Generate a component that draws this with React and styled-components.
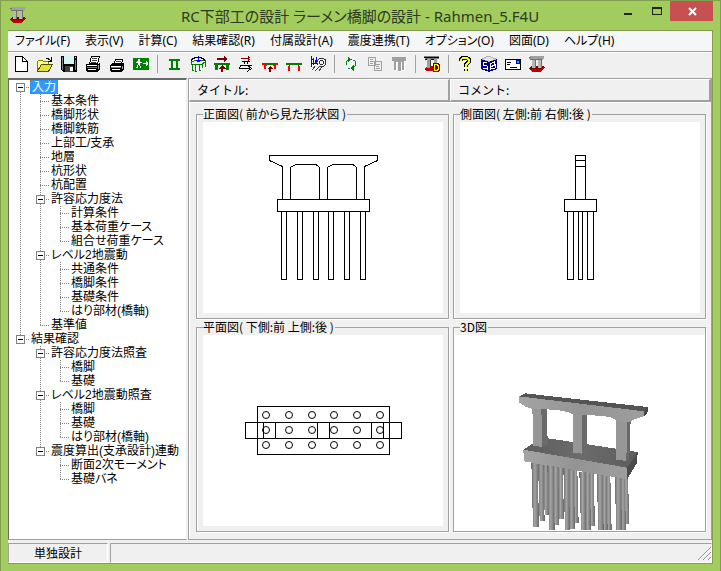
import React, { useState } from 'react'
import styled, { createGlobalStyle, css } from 'styled-components'

const color = {
  frame: '#a2cd5e',
  frameEdge: '#809e4c',
  face: '#f0f0f0',
  shadow: '#a0a0a0',
  dark: '#696969',
  light: '#ffffff',
  select: '#3399ff',
  close: '#c75050'
}

const uiFont = '"Noto Sans", "Noto Sans CJK JP", sans-serif'
const gothic = '"Noto Sans CJK JP", sans-serif'
const treeFont = '"Liberation Sans", "Noto Sans CJK JP", sans-serif'

const GlobalStyle = createGlobalStyle`
  * {
    box-sizing: border-box;
  }

  body {
    margin: 0;
    font-family: ${gothic};
    font-size: 12px;
    line-height: 14px;
    font-feature-settings: "palt";
    color: #000;
  }

  button {
    margin: 0;
    padding: 0;
    border: 0;
    background: none;
    color: inherit;
    font: inherit;
    font-feature-settings: inherit;
  }
`

const Window = styled.div`
  display: flex;
  flex-direction: column;
  min-height: 100vh;
  padding: 0 7px 7px;
  background: ${color.frame};
  border: 1px solid ${color.frameEdge};
`

const TitleBar = styled.header`
  display: grid;
  grid-template-columns: 97px 1fr 100px;
  height: 29px;
  padding-left: 2px;
  align-items: start;
`

const AppIcon = styled.span`
  display: flex;
  padding-top: 6px;
`

const Caption = styled.h1`
  margin: 0;
  padding-top: 3px;
  font-family: ${uiFont};
  font-size: 15px;
  font-weight: 400;
  line-height: 24px;
  text-align: center;
  white-space: nowrap;
  color: #2c3a22;
`

const WindowButtons = styled.div`
  display: flex;
  justify-content: flex-end;
`

const WindowButton = styled.button`
  display: flex;
  width: ${props => props.$close ? 45 : 30}px;
  height: 20px;
  align-items: center;
  justify-content: center;
  background: ${props => props.$close ? color.close : 'transparent'};
`

const Client = styled.div`
  display: flex;
  flex: 1;
  flex-direction: column;
  background: ${color.face};
  border: 1px solid ${color.frameEdge};
  border-width: 1px 1px 1px 0;
`

const MenuBar = styled.nav`
  display: flex;
  gap: 15px;
  height: 20px;
  padding-left: 7px;
  align-items: flex-start;
  background: #f5f6f7;
`

const MenuItem = styled.button`
  font-family: ${uiFont};
  font-size: 12px;
  line-height: 20px;
  white-space: nowrap;
`

const ToolBar = styled.div`
  display: flex;
  height: 27px;
  padding: 0 1px 2px;
  align-items: center;
  border-top: 1px solid ${color.shadow};
  box-shadow: inset 0 1px ${color.light};
`

const ToolButton = styled.button`
  display: flex;
  width: 24px;
  height: 24px;
  align-items: center;
  justify-content: center;
`

const Separator = styled.span`
  width: 1px;
  height: 18px;
  margin: 0 4px;
  background: ${color.shadow};
`

const Workspace = styled.main`
  display: grid;
  flex: 1;
  grid-template-columns: 179px 1fr;
  column-gap: 1px;
`

const Tree = styled.div`
  padding: 0 0 0 1px;
  font-family: ${treeFont};
  background: ${color.light};
  border-top: 2px solid ${color.dark};
  border-left: 1px solid ${color.dark};
  border-right: 1px solid ${color.face};
  border-bottom: 1px solid ${color.shadow};
`

const TreeRow = styled.div`
  display: flex;
  height: 14px;
`

const dots = deg => `repeating-linear-gradient(${deg}deg, #808080 0 1px, transparent 1px 2px)`

const Guide = styled.span`
  display: flex;
  flex: none;
  width: 20px;
  height: 14px;
  align-items: center;
  padding-left: 6px;
  ${props => props.$line === 'pass' && css`
    background: ${dots(180)} 10px 0 / 1px 14px no-repeat;
  `}
  ${props => props.$line === 'first' && css`
    background:
      ${dots(180)} 10px 8px / 1px 6px no-repeat,
      ${dots(90)} 10px 7px / 9px 1px no-repeat;
  `}
  ${props => props.$line === 'branch' && css`
    background:
      ${dots(180)} 10px 0 / 1px 14px no-repeat,
      ${dots(90)} 10px 7px / 9px 1px no-repeat;
  `}
  ${props => props.$line === 'last' && css`
    background:
      ${dots(180)} 10px 0 / 1px 8px no-repeat,
      ${dots(90)} 10px 7px / 9px 1px no-repeat;
  `}
`

const Toggle = styled.button`
  display: grid;
  width: 9px;
  height: 9px;
  place-items: center;
  background: ${color.light};
  border: 1px solid #808080;

  &::before {
    content: "";
    width: 5px;
    height: ${props => props.$open ? 1 : 5}px;
    background: ${props => props.$open
      ? '#000'
      : 'linear-gradient(#000, #000) 50% 50% / 5px 1px no-repeat, linear-gradient(#000, #000) 50% 50% / 1px 5px no-repeat'};
  }
`

const TreeLabel = styled.button`
  height: 14px;
  padding: 0 1px;
  line-height: 14px;
  white-space: nowrap;
  ${props => props.$selected && css`
    padding: 0 2px;
    background: ${color.select};
    color: #fff;
    outline: 1px dotted #cc6600;
    outline-offset: -1px;
  `}
`

const Views = styled.section`
  display: flex;
  flex-direction: column;
  border: 1px solid ${color.shadow};
  box-shadow: inset 1px 1px ${color.light};
`

const Headings = styled.div`
  display: grid;
  grid-template-columns: 1fr 1fr;
  border-bottom: 1px solid ${color.light};
`

const Heading = styled.div`
  height: 23px;
  padding: 3px 7px 0;
  border: 1px solid ${color.light};
  border-right: 2px solid ${color.shadow};
  border-bottom: 2px solid ${color.shadow};
  font-feature-settings: normal;
  font-size: 12px;
`

const ViewGrid = styled.div`
  display: grid;
  flex: 1;
  grid-template-columns: 1fr 1fr;
  grid-template-rows: 1fr 1fr;
  gap: 1px 4px;
  padding: 4px 5px 7px 7px;
`

const View = styled.fieldset`
  display: flex;
  min-width: 0;
  margin: 0;
  padding: ${props => props.$flush ? '1px 0 0' : '1px 5px 5px 6px'};
  border: 1px solid ${color.shadow};
  box-shadow: 1px 1px ${color.light}, inset 1px 0 ${color.light};
`

const Legend = styled.legend`
  margin-left: ${props => props.$flush ? 6 : 0}px;
  padding: 0 1px 0 0;
  background: ${color.face};
  line-height: 14px;
  white-space: pre;
`

const Canvas = styled.div`
  display: flex;
  flex: 1;
  align-items: ${props => props.$flush ? 'flex-end' : 'center'};
  justify-content: center;
  overflow: hidden;
  background: ${color.light};
`

const StatusBar = styled.footer`
  display: grid;
  height: 22px;
  margin-top: 1px;
  padding-top: 2px;
  grid-template-columns: 100px 1fr;
  column-gap: 2px;
`

const StatusCell = styled.div`
  display: flex;
  align-items: center;
  justify-content: ${props => props.$end ? 'flex-end' : 'center'};
  border: 1px solid ${color.shadow};
  border-right-color: ${color.light};
  border-bottom-color: ${color.light};
`

const Svg = ({ size = 16, children }) => (
  <svg width={size} height={size} viewBox="0 0 16 16" fill="none" shapeRendering="crispEdges" aria-hidden="true">
    {children}
  </svg>
)

const NewIcon = () => (
  <Svg>
    <path d="M2.5 .5H9.500L14.500 5.500V15.500H2.500Z" fill="#fff" stroke="#000" />
    <path d="M9.500 .5V5.500H14.500" stroke="#000" />
  </Svg>
)

const OpenIcon = () => (
  <Svg>
    <path d="M.5 14.500V5.500L2 4.500H5L6.500 5.500H11.500V8.500" fill="#ffff80" stroke="#808000" />
    <path d="M.5 15L4.500 8.500H15.500L11.500 15.500H1Z" fill="#e4e430" stroke="#505000" />
    <path d="M9 2.500H10.500L14 4.500M14.500 1V5.500H11" stroke="#000" />
  </Svg>
)

const SaveIcon = () => (
  <Svg>
    <path d="M0 0H16V16H2L0 14Z" fill="#000" />
    <path d="M3 0H13V8H3Z" fill="#d8f4f8" />
    <path d="M4 10H12V16H4Z" fill="#404040" />
    <path d="M9 11H12V15H9ZM14 1H15V2H14Z" fill="#fff" />
    <path d="M1 1V14M14.500 4V14" stroke="#808080" />
  </Svg>
)

const PrintIcon = () => (
  <Svg>
    <path d="M4.500 7.500L6.500 .5H14.500L12.500 7.500Z" fill="#fff" stroke="#000" />
    <path d="M7 2.500H12M6.500 4.500H11.500M6 6.500H11" stroke="#404040" />
    <path d="M1 8H13L15 6V13L12 16H2L1 15Z" fill="#000" />
    <path d="M2 9.500H12M3 13.500H11" stroke="#fff" />
    <path d="M2 11.500H12" stroke="#7070b0" />
    <path d="M13.500 9V13" stroke="#a0a0a0" />
  </Svg>
)

const QuickPrintIcon = () => (
  <Svg>
    <path d="M4.500 8.500L6.500 3.500H13.500L12.500 8.500Z" fill="#fff" stroke="#000" />
    <path d="M7 5.500H12" stroke="#404040" />
    <path d="M1 9L3 7H14L15 8V13L12 16H2L1 15Z" fill="#000" />
    <path d="M2 10.500H12M3 13.500H11" stroke="#fff" />
    <path d="M2 11.500H12" stroke="#7070b0" />
    <path d="M13.500 10V13" stroke="#a0a0a0" />
  </Svg>
)

const ExitIcon = () => (
  <Svg>
    <path d="M0 2H16V14H0Z" fill="#008000" />
    <path d="M5 3H7V5H5ZM4 5H7V9H5V7H3V6H4ZM7 6H9V7H7ZM4 9H5V12H3V11H4ZM6 8H7V10H8V12H7V10H6ZM10 7H13V5H14V6H15V9H14V10H13V8H10Z" fill="#fff" />
  </Svg>
)

const FrameIcon = () => (
  <Svg>
    <path d="M3 3H14V5H3ZM5 5H7V12H5ZM10 5H12V12H10ZM3 12H14V14H3Z" fill="#008000" />
  </Svg>
)

const LoadIcon = () => (
  <Svg>
    <path d="M1 6L5 4.500H15V6L12 8H1ZM2.500 8V14M5.500 8V15M9.500 8V14M12.500 7V12M15 6V11M2 14H4M5 15H7M9 14H11" stroke="#008000" />
    <path d="M1 4.500L3 2.500L6 1.500H10L13 2.500L15 4.500" stroke="#000" />
    <path d="M8.500 0V6M6 4.500H11M7 5.500H10" stroke="#0000ff" />
  </Svg>
)

const GirderLoadIcon = () => (
  <Svg>
    <path d="M0 7H16V9H0ZM1 9H4V14H1ZM12 9H15V14H12Z" fill="#008000" />
    <path d="M3 2H10V0L14 3L10 6V4H3ZM8 9L12 13H9V16H7V13H4Z" fill="#800000" />
  </Svg>
)

const BearingIcon = () => (
  <Svg>
    <path d="M3 2.500H11M12.500 2.500L10 .5M12.500 2.500L10 4.500" stroke="#800000" />
    <path d="M4 5.500H12M6.500 5V8M9.500 5V8M3 9.500H14M3 9L1.500 12.500H12M9 15.500L13.500 12.500L10 10" stroke="#000" />
  </Svg>
)

const PushoverIcon = () => (
  <Svg>
    <path d="M3 7H13V9H3ZM4 9H5V10H4ZM11 9H12V10H11Z" fill="#008000" />
    <path d="M0 7H3V9H0ZM13 7H16V9H13ZM2 9H4V13H2ZM12 9H14V13H12Z" fill="#ff0000" />
    <path d="M8 10L11 13H9V16H7V13H5Z" fill="#800000" />
  </Svg>
)

const PortalIcon = () => (
  <Svg>
    <path d="M0 7H16V9H0ZM3 9H4V10H3ZM12 9H13V10H12Z" fill="#008000" />
    <path d="M2 10H4V15H2ZM12 10H14V15H12Z" fill="#ff0000" />
  </Svg>
)

const SectionIcon = () => (
  <Svg>
    <path d="M1.500 0V11M3.500 2V9M5.500 4V8M6.500 1V8M1 3.500H4M1 7.500H7" stroke="#0000ff" />
    <circle cx="11.500" cy="6.500" r="4.500" stroke="#303030" />
    <circle cx="11.500" cy="6.500" r="2" stroke="#303030" />
    <path d="M2 14L5 10.500M5 15L9 11M9 15L11 12" stroke="#404040" />
  </Svg>
)

const RefreshIcon = () => (
  <Svg>
    <path d="M3.500 9V5.500L6 3.500M12.500 5V9.500L10 12.500" stroke="#008000" />
    <path d="M5 1L9 3.500L5 6ZM11 9V15L7 12Z" fill="#008000" />
    <path d="M5 12.500H7M10 4.500H12" stroke="#008080" />
  </Svg>
)

const CopyIcon = () => (
  <Svg>
    <path d="M1.500 1.500H8.500V9.500H1.500ZM7.500 5.500H14.500V14.500H7.500Z" fill="#f0f0f0" stroke="#a0a0a0" />
    <path d="M3 3.500H6M3 5.500H7M3 7.500H6M9 8.500H13M9 10.500H12M9 12.500H13" stroke="#a0a0a0" />
  </Svg>
)

const PilesIcon = () => (
  <Svg>
    <path d="M2 2H16V7H15V5H14V15H12V7H11V16H8V7H6V15H4V5H2Z" fill="#fff" />
    <path d="M1 1H15V5H13V14H11V6H10V15H7V6H5V14H3V5H1Z" fill="#a0a0a0" />
  </Svg>
)

const PierIcon = () => (
  <Svg>
    <path d="M0 12L3 10H14L16 12L12 15H2Z" fill="#800000" />
    <path d="M2 13H12L15 11V13L11 16H3Z" fill="#c00000" />
    <path d="M0 1L2 0H15V3L13 4H1Z" fill="#a0a0a0" />
    <path d="M3 3H7V12H3ZM9 3H13V12H9Z" fill="#b8b8b8" />
    <path d="M6 4V12M12.500 4V12M0 1.500H2M1 3.500H13" stroke="#707070" />
  </Svg>
)

const DrawingIcon = () => (
  <Svg>
    <path d="M1 12L4 10H10V15H2Z" fill="#c00000" />
    <path d="M0 0H15V3H1Z" fill="#808080" />
    <path d="M0 1.500H15M1 3.500H13" stroke="#000" />
    <path d="M3 3H7V12H3ZM10 3H13V7H10Z" fill="#a0a0a0" />
    <path d="M6.500 4V12" stroke="#404040" />
    <path d="M9 7H14L16 9V14L14 16H9Z" fill="#800000" />
    <path d="M10.500 8.500H13L14.500 10V13L13 14.500H10.500Z" stroke="#ffff00" />
  </Svg>
)

const HelpIcon = () => (
  <Svg>
    <path d="M4 5V3.500L5.500 2H10L12 3.500V6L8.500 9V11M8.500 13V15" stroke="#000" strokeWidth="4" />
    <path d="M4 5V3.500L5.500 2H10L12 3.500V6L8.500 9V11M8.500 13V15" stroke="#ffff00" strokeWidth="2" />
  </Svg>
)

const ProductIcon = () => (
  <Svg>
    <path d="M1 3L7 0L15 3L8 6Z" fill="#e4e4e4" stroke="#b0b0b0" />
    <path d="M0 3L8 6L16 3V13L8 16L0 13Z" fill="#000080" />
    <path d="M6 7L2 6V9L6 10V13L2 12M9.500 14V8L13 6V9L10 11L14 9V12L10 13" stroke="#fff" />
  </Svg>
)

const MailIcon = () => (
  <Svg>
    <path d="M.5 3.500H15.500V13.500H.5Z" fill="#fff" stroke="#000" />
    <path d="M11 4H15V8H11Z" fill="#0000a0" />
    <path d="M12 5H14V7H12Z" fill="#00c0ff" />
    <path d="M2 6.500H6M2 8.500H5M5 11.500H12" stroke="#000" />
  </Svg>
)

const MinimizeIcon = () => (
  <Svg>
    <path d="M5 10H13V12H5Z" fill="#1c2414" />
  </Svg>
)

const MaximizeIcon = () => (
  <Svg>
    <path d="M4 4H14V12H4ZM5 6V11H13V6Z" fill="#1c2414" fillRule="evenodd" />
  </Svg>
)

const CloseIcon = () => (
  <svg width="16" height="16" viewBox="0 0 16 16" aria-hidden="true">
    <path d="M5 5L12 12M12 5L5 12" stroke="#fff" strokeWidth="2" />
  </svg>
)

const GripIcon = () => (
  <svg width="14" height="14" viewBox="0 0 14 14" aria-hidden="true">
    <path d="M1 14L14 1M6 14L14 6M11 14L14 11" stroke="#909090" strokeWidth="1" />
    <path d="M2 14L14 2M7 14L14 7M12 14L14 12" stroke="#fff" strokeWidth="1" />
  </svg>
)

const menus = [
  'ファイル(F)', '表示(V)', '計算(C)', '結果確認(R)', '付属設計(A)',
  '震度連携(T)', 'オプション(O)', '図面(D)', 'ヘルプ(H)'
]

const tools = [
  [['新規', NewIcon], ['開く', OpenIcon], ['保存', SaveIcon], ['印刷', PrintIcon], ['簡易印刷', QuickPrintIcon], ['終了', ExitIcon]],
  [['形状', FrameIcon], ['荷重', LoadIcon], ['橋脚', GirderLoadIcon], ['支承', BearingIcon], ['はり', PushoverIcon], ['柱', PortalIcon], ['断面', SectionIcon]],
  [['更新', RefreshIcon], ['複写', CopyIcon], ['杭', PilesIcon]],
  [['図面', DrawingIcon]],
  [['ヘルプ', HelpIcon], ['製品', ProductIcon], ['メール', MailIcon], ['バージョン', PierIcon]]
]

const leaf = title => ({ title })

const tree = [
  {
    title: '入力',
    children: [
      ...['基本条件', '橋脚形状', '橋脚鉄筋', '上部工/支承', '地層', '杭形状', '杭配置'].map(leaf),
      { title: '許容応力度法', children: ['計算条件', '基本荷重ケース', '組合せ荷重ケース'].map(leaf) },
      { title: 'レベル2地震動', children: ['共通条件', '橋脚条件', '基礎条件', 'はり部材(橋軸)'].map(leaf) },
      leaf('基準値')
    ]
  },
  {
    title: '結果確認',
    children: [
      { title: '許容応力度法照査', children: ['橋脚', '基礎'].map(leaf) },
      { title: 'レベル2地震動照査', children: ['橋脚', '基礎', 'はり部材(橋軸)'].map(leaf) },
      { title: '震度算出(支承設計)連動', children: ['断面2次モーメント', '基礎バネ'].map(leaf) }
    ]
  }
]

const TreeNodes = ({ nodes, guides = [], path = '', state }) => nodes.map((node, i) => {
  const id = `${path}/${i}`
  const last = i === nodes.length - 1
  const open = !state.closed.includes(id)
  const line = last ? 'last' : !path && i === 0 ? 'first' : 'branch'

  return (
    <React.Fragment key={id}>
      <TreeRow role="treeitem" aria-level={guides.length + 1} aria-selected={state.selected === id}>
        {guides.map((guide, n) => <Guide key={n} $line={guide} />)}
        <Guide $line={line}>
          {node.children && (
            <Toggle $open={open} aria-label={`${node.title}の開閉`} onClick={() => state.toggle(id)} />
          )}
        </Guide>
        <TreeLabel $selected={state.selected === id} onClick={() => state.select(id)}>
          {node.title}
        </TreeLabel>
      </TreeRow>
      {node.children && open && (
        <TreeNodes nodes={node.children} guides={[...guides, last ? 'none' : 'pass']} path={id} state={state} />
      )}
    </React.Fragment>
  )
})

const LineDrawing = ({ children }) => (
  <svg width="200" height="161" viewBox="20 15 200 161" fill="none" stroke="#000" shapeRendering="crispEdges" aria-hidden="true">
    <g transform="translate(.5 .5)">{children}</g>
  </svg>
)

const FrontView = () => (
  <LineDrawing>
    <path d="M79 77V44L66 38V33H174V38L161 44V77" />
    <path d="M87 77V45L90 43L93 42H112L114 43L116 45V77M124 77V45L127 43L130 42H149L151 43L153 45V77" />
    <path d="M74 77H166V89H74Z" />
    {[78, 94, 110, 125, 141, 157].map(x => <path key={x} d={`M${x} 89V157H${x + 5}V89`} />)}
  </LineDrawing>
)

const SideView = () => (
  <LineDrawing>
    <path d="M115 77V33H125V77M115 38H125M115 44H125M104 77H136V89H104Z" />
    <path d="M107 89V157H113V89M118 89V157H122V89M127 89V157H133V89" />
  </LineDrawing>
)

const PlanView = () => (
  <LineDrawing>
    <path d="M54 71H186V119H54ZM42 87H198V103H42Z" />
    <path d="M60 87V103M72 87V103M114 87V103M126 87V103M168 87V103M180 87V103" />
    {[80, 95, 110].map(y => [63, 86, 109, 131, 154, 177].map(x => (
      <circle key={`${x}-${y}`} cx={x - 0.5} cy={y - 0.5} r="3.500" shapeRendering="auto" />
    )))}
  </LineDrawing>
)

// left edge, width, top, bottom: back row first
const piles = [
  [299, 13, 446, 600], [343, 14, 450, 611], [388, 13, 460, 624], [436, 14, 470, 632], [487, 13, 480, 645], [540, 13, 484, 627],
  [284, 15, 446, 618], [328, 15, 450, 629], [375, 15, 460, 641], [424, 14, 470, 645], [475, 13, 478, 645], [531, 12, 486, 645],
  [264, 18, 440, 635], [312, 17, 450, 645], [360, 15, 460, 645], [408, 16, 470, 645], [460, 16, 474, 645], [514, 17, 484, 645]
]

const SolidView = () => (
  <svg width="251" height="196" viewBox="27 60 753 588" shapeRendering="crispEdges" aria-hidden="true">
    <defs>
      <linearGradient id="pile">
        <stop offset="0" stopColor="#686868" />
        <stop offset=".45" stopColor="#a4a4a4" />
        <stop offset="1" stopColor="#686868" />
      </linearGradient>
      <linearGradient id="face">
        <stop offset="0" stopColor="#a4a4a4" />
        <stop offset=".5" stopColor="#949494" />
        <stop offset="1" stopColor="#9e9e9e" />
      </linearGradient>
      <linearGradient id="slab">
        <stop offset="0" stopColor="#5c5c5c" />
        <stop offset=".5" stopColor="#6c6c6c" />
        <stop offset="1" stopColor="#5c5c5c" />
      </linearGradient>
    </defs>
    {piles.map(([x, width, top, bottom]) => (
      <path
        key={x}
        d={`M${x - 5} ${top}H${x + width - 4}L${x + width} ${bottom}H${x}Z`}
        fill="url(#pile)"
      />
    ))}
    <path d="M235 404L266 384L310 370L578 411L546 458Z" fill="url(#slab)" />
    <path d="M235 404L546 458V493L237 439Z" fill="url(#face)" />
    <path d="M546 458L578 411L576 444L546 493Z" fill="#4c4c4c" />
    <path d="M288 280H306L308 388L292 396ZM412 300H425V408L412 416ZM546 314H557L553 428L544 438Z" fill="#6a6a6a" />
    <path d="M262 278H289L292 396L265 392ZM385 292H412V416L385 413ZM514 310H547L544 438L514 434Z" fill="#979797" />
    <path d="M222 245L240 235L608 276L598 290Z" fill="#545454" />
    <path d="M598 288L608 276V292L596 305Z" fill="#484848" />
    <path
      d="M222 244L598 289L596 304L562 315L553 322L514 316L500 308L475 303L425 300L385 299L372 292L350 287L306 283L262 282L240 274L222 262Z"
      fill="url(#face)"
    />
  </svg>
)

const views = [
  { title: '正面図( 前から見た形状図 )', drawing: FrontView },
  { title: '側面図( 左側:前 右側:後 )', drawing: SideView },
  { title: '平面図( 下側:前 上側:後 )', drawing: PlanView },
  { title: '3D図', drawing: SolidView, flush: true }
]

export default function App() {
  const [selected, select] = useState('/0')
  const [closed, setClosed] = useState([])
  const toggle = id => setClosed(ids => ids.includes(id) ? ids.filter(x => x !== id) : [...ids, id])

  return (
    <Window>
      <GlobalStyle />
      <TitleBar>
        <AppIcon><PierIcon /></AppIcon>
        <Caption>RC下部工の設計 ラーメン橋脚の設計 - Rahmen_5.F4U</Caption>
        <WindowButtons>
          <WindowButton aria-label="最小化"><MinimizeIcon /></WindowButton>
          <WindowButton aria-label="最大化"><MaximizeIcon /></WindowButton>
          <WindowButton aria-label="閉じる" $close><CloseIcon /></WindowButton>
        </WindowButtons>
      </TitleBar>
      <Client>
        <MenuBar>
          {menus.map(menu => <MenuItem key={menu}>{menu}</MenuItem>)}
        </MenuBar>
        <ToolBar role="toolbar">
          {tools.map((group, i) => (
            <React.Fragment key={i}>
              {i > 0 && <Separator />}
              {group.map(([label, Icon]) => (
                <ToolButton key={label} aria-label={label}><Icon /></ToolButton>
              ))}
            </React.Fragment>
          ))}
        </ToolBar>
        <Workspace>
          <Tree role="tree">
            <TreeNodes nodes={tree} state={{ selected, select, closed, toggle }} />
          </Tree>
          <Views>
            <Headings>
              <Heading>タイトル:</Heading>
              <Heading>コメント:</Heading>
            </Headings>
            <ViewGrid>
              {views.map(({ title, drawing: Drawing, flush }) => (
                <View key={title} $flush={flush}>
                  <Legend $flush={flush}>{title}</Legend>
                  <Canvas $flush={flush}><Drawing /></Canvas>
                </View>
              ))}
            </ViewGrid>
          </Views>
        </Workspace>
        <StatusBar>
          <StatusCell>単独設計</StatusCell>
          <StatusCell $end><GripIcon /></StatusCell>
        </StatusBar>
      </Client>
    </Window>
  )
}
